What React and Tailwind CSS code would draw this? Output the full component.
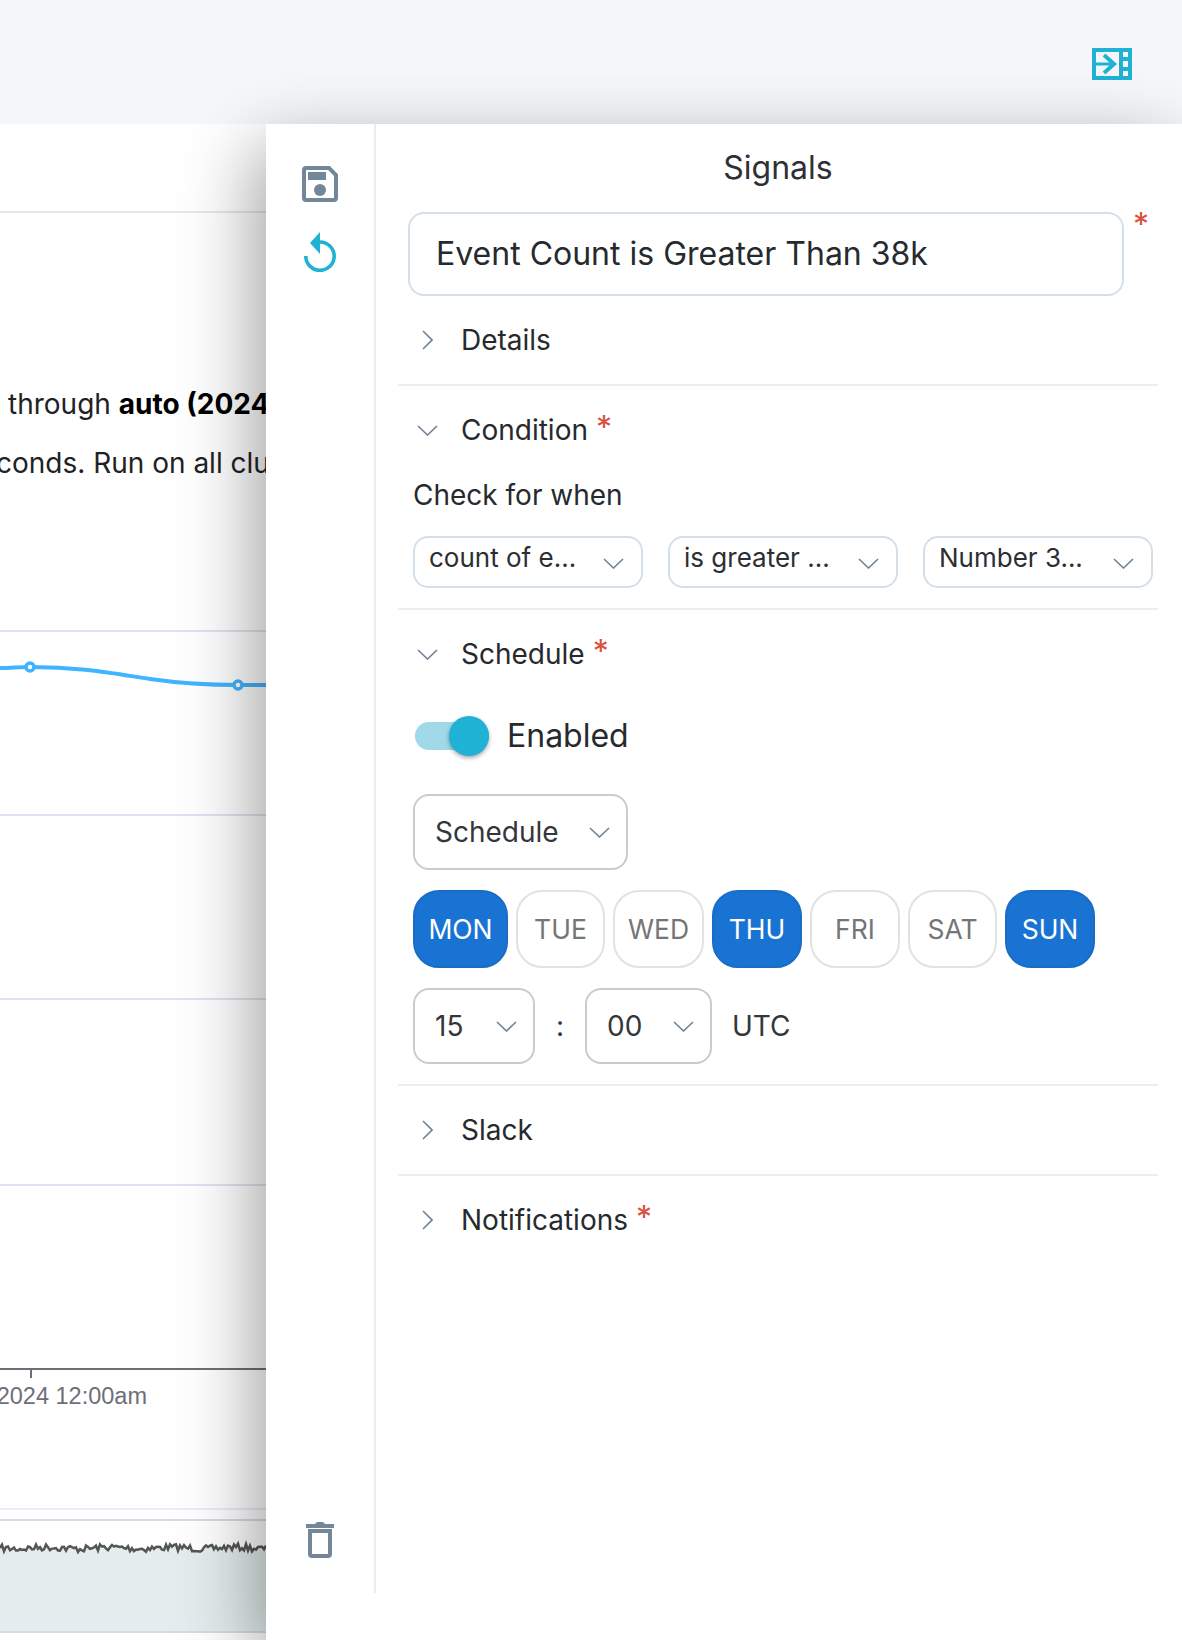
import React from 'react'

const ChevronDown = ({ className = '' }) => (
    <svg width="21" height="11" viewBox="0 0 21 11" fill="none" className={`shrink-0 ${className}`}>
        <path d="M1 1 L10.5 10 L20 1" stroke="#6f8296" strokeWidth="1.6" />
    </svg>
)

const ChevronRight = () => (
    <svg width="11" height="20" viewBox="0 0 11 20" fill="none" className="shrink-0">
        <path d="M1 1 L10 10 L1 19" stroke="#6f8296" strokeWidth="1.6" />
    </svg>
)

const Star = ({ className = '' }) => (
    <span className={`text-[#d9503f] text-[32px] leading-none ${className}`}>*</span>
)

const SectionHead = ({ label, open, required }) => (
    <div className="h-[88px] flex items-center text-[28px] text-[#262a2e]">
        <div className="w-[63px] flex justify-center pr-[5px] pl-[1px]">
            <div className="w-[40px] flex justify-center">
                {open ? <ChevronDown /> : <ChevronRight />}
            </div>
        </div>
        <span>{label}</span>
        {required && <Star className="ml-[8px] mb-[4px]" />}
    </div>
)

const MiniSelect = ({ label }) => (
    <div className="w-[230px] h-[52px] border-2 border-[#d5dfe8] rounded-[15px] flex justify-between pl-[14px] pr-[17px] bg-white">
        <span className="text-[26px] leading-[40px] text-[#2b2f33]">{label}</span>
        <ChevronDown className="mt-[20px]" />
    </div>
)

const BoxSelect = ({ label, width }) => (
    <div className={`${width} h-[76px] border-2 border-[#cbcbcb] rounded-[16px] flex items-center justify-between pl-[20px] pr-[16px] text-[28px] text-[#33373b]`}>
        <span>{label}</span>
        <ChevronDown />
    </div>
)

const days = [
    { name: 'MON', w: 'w-[95px]', on: true },
    { name: 'TUE', w: 'w-[89px]' },
    { name: 'WED', w: 'w-[91px]' },
    { name: 'THU', w: 'w-[90px]', on: true },
    { name: 'FRI', w: 'w-[90px]' },
    { name: 'SAT', w: 'w-[89px]' },
    { name: 'SUN', w: 'w-[90px]', on: true },
]

// jagged traffic line at the bottom of the chart
let seed = 7
const rand = () => {
    seed = (seed * 16807) % 2147483647
    return seed / 2147483647 - 0.5
}
let noise = 'M0 1548'
for (let x = 2; x <= 266; x += 2) {
    const y = 1548 + rand() * 7 + Math.sin(x * 0.1) * 0.8
    noise += ` L${x} ${y.toFixed(1)}`
}

const Chart = () => (
    <svg width="266" height="1148" viewBox="0 492 266 1148" className="block">
        <g stroke="#e0e3ef" strokeWidth="2">
            <line x1="0" y1="631" x2="266" y2="631" />
            <line x1="0" y1="815" x2="266" y2="815" />
            <line x1="0" y1="999" x2="266" y2="999" />
            <line x1="0" y1="1185" x2="266" y2="1185" />
        </g>
        <path d="M0 668 C10 668 20 667 30 667 C80 667 110 673 150 679 C185 684 210 685 238 685 L266 685" fill="none" stroke="#41b4ff" strokeWidth="4" />
        <circle cx="30" cy="667" r="4" fill="#fff" stroke="#41b4ff" strokeWidth="3.5" />
        <circle cx="238" cy="685" r="4" fill="#fff" stroke="#41b4ff" strokeWidth="3.5" />
        <line x1="0" y1="1369" x2="266" y2="1369" stroke="#6e6e78" strokeWidth="2" />
        <line x1="31" y1="1369" x2="31" y2="1378" stroke="#6e6e78" strokeWidth="2" />
        <text x="147" y="1404" textAnchor="end" fontFamily="Liberation Sans, sans-serif" fontSize="23.5" fill="#6e6e78">2024 12:00am</text>
        <line x1="0" y1="1509" x2="266" y2="1509" stroke="#e8eef2" strokeWidth="2" />
        <line x1="0" y1="1520" x2="266" y2="1520" stroke="#d3dbea" strokeWidth="2" />
        <path d={`${noise} L266 1632 L0 1632 Z`} fill="#e4eded" />
        <path d={noise} fill="none" stroke="#555" strokeWidth="2.5" />
        <line x1="0" y1="1632" x2="266" y2="1632" stroke="#d3dbea" strokeWidth="2" />
    </svg>
)

export default function App() {
    return (
        <div className="w-[1182px] h-[1640px] overflow-hidden flex flex-col bg-white font-[family-name:Inter,sans-serif]">
            <div className="h-[124px] shrink-0 bg-[#f5f7fb] flex justify-end pt-[48px] pr-[50px]">
                <svg width="40" height="32" viewBox="0 0 40 32">
                    <path fillRule="evenodd" d="M0 0H40V32H0Z M4 4V28H27V4Z M31 4V9H36V4Z M31 13V19H36V13Z M31 23V28H36V23Z" fill="#1fb2d4" />
                    <path d="M4 16H23" stroke="#1fb2d4" strokeWidth="3" />
                    <path d="M12 7L22 16L12 25" fill="none" stroke="#1fb2d4" strokeWidth="4" />
                </svg>
            </div>

            <div className="flex flex-1 min-h-0">
                {/* what's behind the drawer */}
                <div className="w-[266px] shrink-0 overflow-hidden">
                    <div className="h-[89px] border-b-2 border-[#e3e9f0]" />
                    <div className="pt-[162px] h-[279px] text-[28px] leading-[59px] text-[#1f2225] whitespace-nowrap">
                        <div className="pl-[8px]">through <b className="font-bold text-black">auto (2024</b></div>
                        <div className="-ml-[4px]">conds. Run on all clu</div>
                    </div>
                    <Chart />
                </div>

                <div className="relative z-10 flex-1 flex bg-white shadow-[-10px_24px_70px_rgba(0,0,0,0.38)]">
                    <div className="w-[110px] h-[1469px] shrink-0 border-r-2 border-[#e8eef2] flex flex-col justify-between items-center pt-[42px] pb-[35px]">
                        <div className="flex flex-col items-center gap-[30px]">
                            <svg width="36" height="36" viewBox="0 0 36 36" fill="none">
                                <path d="M4 2H27L34 9V32a2 2 0 0 1-2 2H4a2 2 0 0 1-2-2V4a2 2 0 0 1 2-2Z" stroke="#73869a" strokeWidth="4" />
                                <rect x="6" y="6" width="18" height="8" fill="#73869a" />
                                <circle cx="18" cy="24" r="6" fill="#73869a" />
                            </svg>
                            <svg width="32" height="40" viewBox="0 0 32 40" fill="none">
                                <path d="M16 0V22L6 11Z" fill="#1fb2d4" />
                                <path d="M16 10a14.2 14.2 0 1 1-14.2 14" stroke="#1fb2d4" strokeWidth="3.6" />
                            </svg>
                        </div>
                        <svg width="28" height="36" viewBox="0 0 28 36" fill="none">
                            <path d="M0 2H9L11 0H17L19 2H28V6H0Z" fill="#73869a" />
                            <path d="M4 9V32a2 2 0 0 0 2 2H22a2 2 0 0 0 2-2V9Z" stroke="#73869a" strokeWidth="4" />
                        </svg>
                    </div>

                    <div className="w-[760px] ml-[22px] text-[#262a2e]">
                        <div className="h-[88px] flex justify-center pt-[24px] text-[32px] leading-[40px] text-[#2d3135]">Signals</div>

                        <div className="flex pl-[10px] h-[84px]">
                            <div className="w-[716px] h-[84px] border-2 border-[#d5dfe8] rounded-[16px] flex items-center pl-[26px] text-[32px]">
                                Event Count is Greater Than 38k
                            </div>
                            <Star className="ml-[9px] -mt-[3px]" />
                        </div>

                        <div className="border-b-2 border-[#e8eef2]">
                            <SectionHead label="Details" />
                        </div>

                        <div className="border-b-2 border-[#e8eef2] pb-[20px]">
                            <SectionHead label="Condition" open required />
                            <div className="pl-[15px] text-[28px] leading-[46px] -mt-[2px]">Check for when</div>
                            <div className="pl-[15px] mt-[18px] flex gap-[25px]">
                                <MiniSelect label="count of e..." />
                                <MiniSelect label="is greater ..." />
                                <MiniSelect label="Number 3..." />
                            </div>
                        </div>

                        <div className="border-b-2 border-[#e8eef2] pb-[20px]">
                            <SectionHead label="Schedule" open required />
                            <div className="pl-[17px] pt-[18px] flex items-center h-[58px]">
                                <div className="w-[74px] h-[28px] rounded-full bg-[#9fd9ea] flex items-center justify-end">
                                    <div className="w-[40px] h-[40px] rounded-full bg-[#1fb2d4] shadow-[0_2px_4px_rgba(0,0,0,0.35)]" />
                                </div>
                                <span className="ml-[18px] text-[32px]">Enabled</span>
                            </div>
                            <div className="pl-[15px] mt-[38px]">
                                <BoxSelect label="Schedule" width="w-[215px]" />
                            </div>
                            <div className="pl-[15px] mt-[20px] flex gap-[8px]">
                                {days.map((d) => (
                                    <div
                                        key={d.name}
                                        className={`${d.w} h-[78px] rounded-[26px] border-2 flex items-center justify-center text-[26.5px] font-normal pt-[2px] ${d.on ? 'bg-[#1873d3] border-[#1a6cc4] text-white' : 'bg-white border-[#e2e2e2] text-[#757575]'}`}
                                    >
                                        {d.name}
                                    </div>
                                ))}
                            </div>
                            <div className="pl-[15px] mt-[20px] flex items-center text-[28px] text-[#33373b]">
                                <BoxSelect label="15" width="w-[122px]" />
                                <span className="w-[50px] text-center">:</span>
                                <BoxSelect label="00" width="w-[127px]" />
                                <span className="ml-[20px]">UTC</span>
                            </div>
                        </div>

                        <div className="border-b-2 border-[#e8eef2]">
                            <SectionHead label="Slack" />
                        </div>
                        <SectionHead label="Notifications" required />
                    </div>
                </div>
            </div>
        </div>
    )
}
